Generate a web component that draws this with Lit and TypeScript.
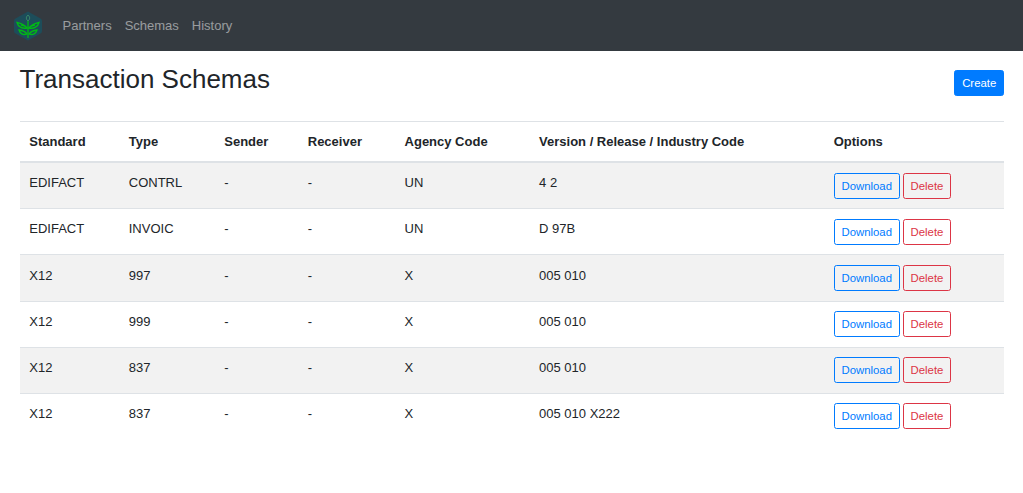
import { LitElement, css, html, svg } from "lit";
import { customElement } from "lit/decorators.js";

const headers = [
  "Standard",
  "Type",
  "Sender",
  "Receiver",
  "Agency Code",
  "Version / Release / Industry Code",
  "Options",
];

const rows = [
  ["EDIFACT", "CONTRL", "-", "-", "UN", "4 2"],
  ["EDIFACT", "INVOIC", "-", "-", "UN", "D 97B"],
  ["X12", "997", "-", "-", "X", "005 010"],
  ["X12", "999", "-", "-", "X", "005 010"],
  ["X12", "837", "-", "-", "X", "005 010"],
  ["X12", "837", "-", "-", "X", "005 010 X222"],
];

const widths = [99.5, 95.5, 83.5, 96.8, 134.5, 294.7, 180];

const logo = svg`
  <svg class="logo" viewBox="0 0 30 30" width="30" height="30">
    <path d="M15 0.5 L27.5 7.5 Q29 8.3 29 10 V20 Q29 21.7 27.5 22.5 L15 29.5 L2.5 22.5 Q1 21.7 1 20 V10 Q1 8.3 2.5 7.5 Z" fill="#1d4d5a" />
    <path d="M15 4 c-2.2 2 -2.2 4 0 6 c2.2 -2 2.2 -4 0 -6 Z" fill="none" stroke="#3d8f6a" stroke-width="1" />
    <g fill="none" stroke="#00bb14" stroke-width="1.3">
      <path d="M15 10 V27" />
      <path d="M14 17 C11 13 8 12.5 4 11.5 C5 15.5 9 18 14 17 Z" />
      <path d="M16 17 C19 13 22 12.5 26 11.5 C25 15.5 21 18 16 17 Z" />
      <path d="M14 23 C12 20 9.5 19.5 6 19 C7 22.5 10 24.5 14 23 Z" />
      <path d="M16 23 C18 20 20.5 19.5 24 19 C23 22.5 20 24.5 16 23 Z" />
      <path d="M8 14 L12 15 M22 14 L18 15" />
    </g>
  </svg>
`;

@customElement("app-root")
export class AppRoot extends LitElement {
  static styles = css`
    :host {
      display: block;
      font-family: "Liberation Sans", Arial, sans-serif;
      font-size: 13px;
      line-height: 19.5px;
      color: #212529;
      background: #fff;
    }
    .navbar {
      display: flex;
      align-items: center;
      height: 51px;
      padding: 0 13px;
      background: #343a40;
      box-sizing: border-box;
    }
    .logo {
      display: block;
      width: 30px;
      height: 30px;
      margin-right: 13px;
    }
    .nav {
      display: flex;
      padding-left: 6.5px;
      gap: 13px;
    }
    .nav a {
      color: rgba(255, 255, 255, 0.5);
      text-decoration: none;
    }
    .content {
      padding: 0 19px 0 19.5px;
    }
    .title-row {
      display: flex;
      justify-content: space-between;
      align-items: flex-start;
      height: 70.37px;
    }
    h2 {
      margin: 13px 0 0;
      font-size: 26px;
      line-height: 31.2px;
      font-weight: 500;
    }
    .btn {
      display: inline-block;
      box-sizing: border-box;
      padding: 3.6px 6.75px 2.9px;
      border: 1px solid transparent;
      border-radius: 2.6px;
      background: transparent;
      font: 11.375px/17.0625px "Liberation Sans", Arial, sans-serif;
      vertical-align: middle;
    }
    .create {
      margin-top: 19px;
      background: #007bff;
      border-color: #007bff;
      color: #fff;
    }
    .download {
      border-color: #007bff;
      color: #007bff;
    }
    .delete {
      margin-left: 3px;
      border-color: #dc3545;
      color: #dc3545;
    }
    table {
      width: 984.5px;
      table-layout: fixed;
      border-collapse: collapse;
    }
    th,
    td {
      padding: 9.75px;
      text-align: left;
      vertical-align: top;
      border-top: 1px solid #dee2e6;
    }
    tbody td {
      padding-top: 10.05px;
      padding-bottom: 9.45px;
    }
    thead th {
      border-bottom: 2px solid #dee2e6;
      font-weight: 700;
    }
    tbody tr:nth-child(odd) {
      background: #f2f2f2;
    }
    tbody td.options {
      padding-top: 9.75px;
      padding-bottom: 9.75px;
      white-space: nowrap;
    }
  `;

  render() {
    return html`
      <nav class="navbar">
        ${logo}
        <div class="nav">
          <a href="#">Partners</a>
          <a href="#">Schemas</a>
          <a href="#">History</a>
        </div>
      </nav>
      <main class="content">
        <div class="title-row">
          <h2>Transaction Schemas</h2>
          <button class="btn create">Create</button>
        </div>
        <table>
          <colgroup>
            ${widths.map((w) => html`<col style="width: ${w}px" />`)}
          </colgroup>
          <thead>
            <tr>
              ${headers.map((h) => html`<th>${h}</th>`)}
            </tr>
          </thead>
          <tbody>
            ${rows.map(
              (row) => html`
                <tr>
                  ${row.map((c) => html`<td>${c}</td>`)}
                  <td class="options">
                    <button class="btn download">Download</button><button class="btn delete">Delete</button>
                  </td>
                </tr>
              `
            )}
          </tbody>
        </table>
      </main>
    `;
  }
}
